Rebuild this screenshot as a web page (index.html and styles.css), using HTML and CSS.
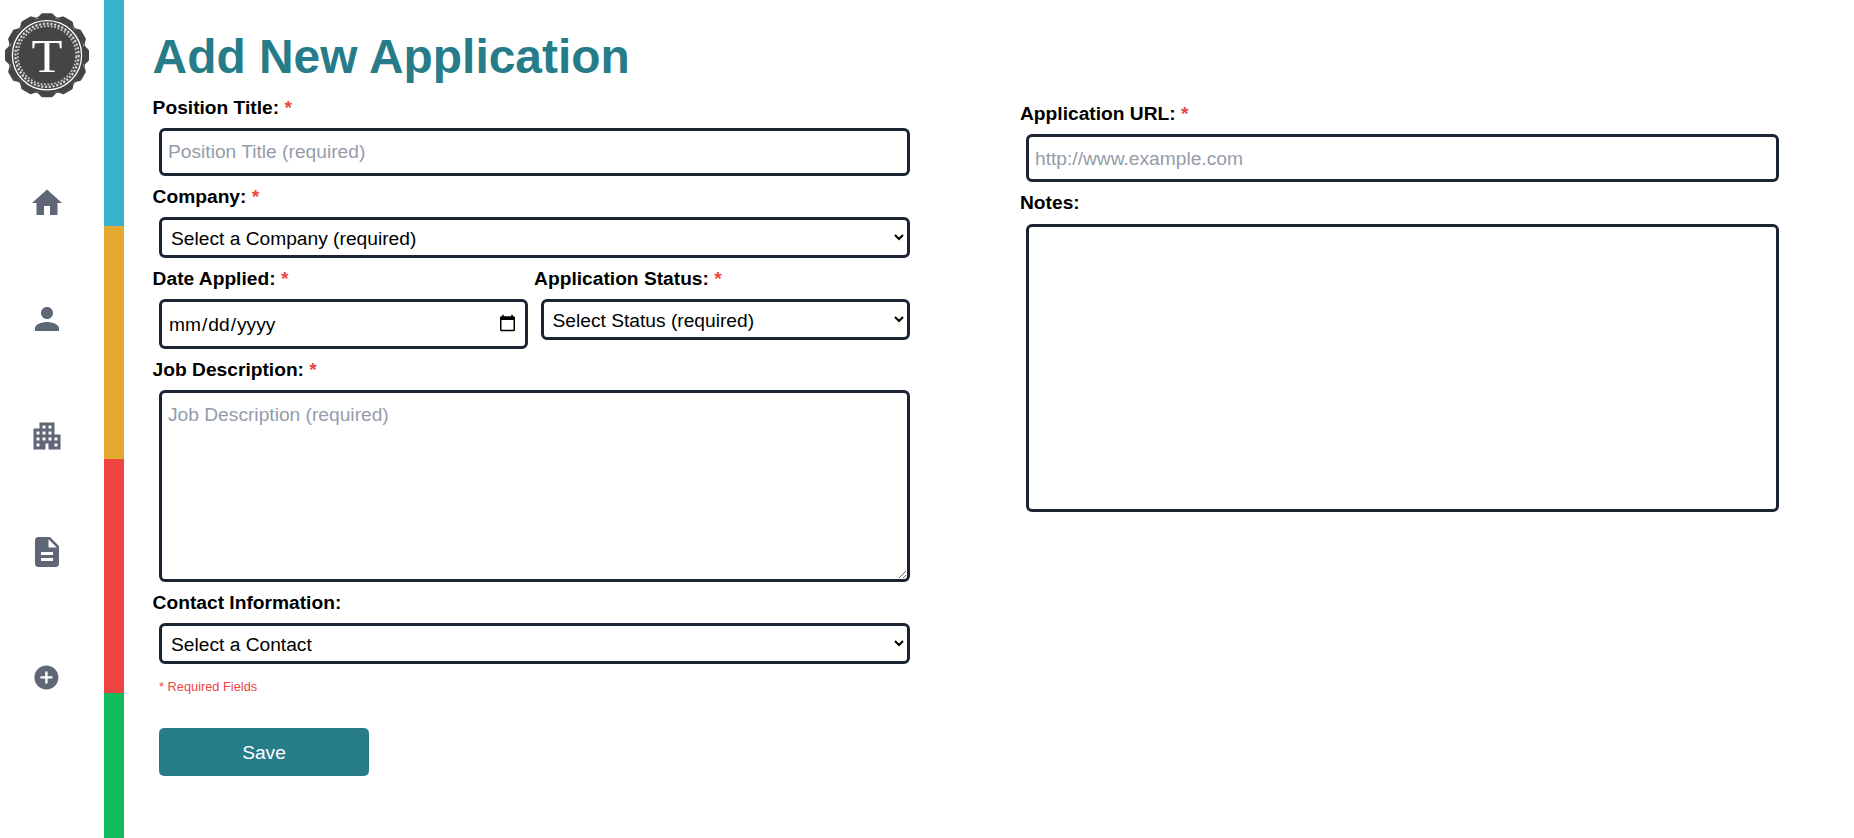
FILE: index.html
```html
<!DOCTYPE html>
<html lang="en">
<head>
<meta charset="utf-8">
<title>Add New Application</title>
<link rel="stylesheet" href="styles.css">
</head>
<body>
<div class="app">
  <nav class="sidebar">
    <svg class="logo" viewBox="-43 -43.3 86 86">
      <defs><path id="tooth" d="M-11-37Q-8-38.5-6-41.2Q-5.300-42-4.500-42H4.500Q5.300-42 6-41.200Q8-38.500 11-37Z"/></defs>
      <g fill="#444547">
        <circle r="38"/>
        <use href="#tooth"/>
        <use href="#tooth" transform="rotate(30)"/>
        <use href="#tooth" transform="rotate(60)"/>
        <use href="#tooth" transform="rotate(90)"/>
        <use href="#tooth" transform="rotate(120)"/>
        <use href="#tooth" transform="rotate(150)"/>
        <use href="#tooth" transform="rotate(180)"/>
        <use href="#tooth" transform="rotate(210)"/>
        <use href="#tooth" transform="rotate(240)"/>
        <use href="#tooth" transform="rotate(270)"/>
        <use href="#tooth" transform="rotate(300)"/>
        <use href="#tooth" transform="rotate(330)"/>
      </g>
      <g fill="none">
        <circle r="34.600" stroke="#fff" stroke-width="1.300"/>
        <circle r="31.600" stroke="#d6d6d6" stroke-width="2.200" stroke-dasharray="2.200 1.600"/>
        <circle r="29.200" stroke="#c4c4c5" stroke-width="1.800" stroke-dasharray="1.900 1.590" transform="rotate(3)"/>
      </g>
      <text class="logo-letter" x="0" y="17" text-anchor="middle" textLength="31" lengthAdjust="spacingAndGlyphs">T</text>
    </svg>
    <a class="nav home"><svg viewBox="0 0 24 24"><path d="M10 20v-6h4v6h5v-8h3L12 3 2 12h3v8z"/></svg></a>
    <a class="nav person"><svg viewBox="0 0 24 24"><path d="M12 12c2.21 0 4-1.79 4-4s-1.79-4-4-4-4 1.79-4 4 1.79 4 4 4zm0 2c-2.67 0-8 1.34-8 4v2h16v-2c0-2.66-5.33-4-8-4z"/></svg></a>
    <a class="nav company"><svg viewBox="0 0 24 24"><path d="M17 11V3H7v4H3v14h8v-4h2v4h8V11h-4zM7 19H5v-2h2v2zm0-4H5v-2h2v2zm0-4H5V9h2v2zm4 4H9v-2h2v2zm0-4H9V9h2v2zm0-4H9V5h2v2zm4 8h-2v-2h2v2zm0-4h-2V9h2v2zm0-4h-2V5h2v2zm4 12h-2v-2h2v2zm0-4h-2v-2h2v2z"/></svg></a>
    <a class="nav document"><svg viewBox="0 0 24 24"><path d="M14 2H6c-1.1 0-1.99.9-1.99 2L4 20c0 1.1.89 2 1.99 2H18c1.1 0 2-.9 2-2V8l-6-6zm2 16H8v-2h8v2zm0-4H8v-2h8v2zm-3-5V3.500L18.500 9H13z"/></svg></a>
    <a class="nav add"><svg viewBox="0 0 24 24"><path d="M12 2C6.480 2 2 6.480 2 12s4.480 10 10 10 10-4.480 10-10S17.520 2 12 2zm5 11h-4v4h-2v-4H7v-2h4V7h2v4h4v2z"/></svg></a>
  </nav>
  <div class="stripes"><i class="blue"></i><i class="gold"></i><i class="red"></i><i class="green"></i></div>
  <form class="form">
    <div class="column main">
      <h1>Add New Application</h1>
      <label>Position Title: <span>*</span></label>
      <input class="field" type="text" placeholder="Position Title (required)">
      <label>Company: <span>*</span></label>
      <select class="field"><option>Select a Company (required)</option></select>
      <div class="pair">
        <div class="column">
          <label>Date Applied: <span>*</span></label>
          <input class="field date" type="date">
        </div>
        <div class="column">
          <label>Application Status: <span>*</span></label>
          <select class="field"><option>Select Status (required)</option></select>
        </div>
      </div>
      <label>Job Description: <span>*</span></label>
      <textarea class="field job" placeholder="Job Description (required)"></textarea>
      <label>Contact Information:</label>
      <select class="field"><option>Select a Contact</option></select>
      <p class="required">* Required Fields</p>
      <button class="save" type="button">Save</button>
    </div>
    <div class="column side">
      <label>Application URL: <span>*</span></label>
      <input class="field url" type="url" placeholder="http://www.example.com">
      <label>Notes:</label>
      <textarea class="field notes"></textarea>
    </div>
  </form>
</div>
</body>
</html>
```
FILE: styles.css
```css
* { box-sizing: border-box; }
body {
  margin: 0;
  background: #fff;
  color: #000;
  font: 19.2px/29px "Liberation Sans", Arial, sans-serif;
  overflow: hidden;
}
.app { display: flex; height: 838px; }

.sidebar {
  width: 104px;
  padding: 12px 0 0 4px;
  display: flex;
  flex-direction: column;
  align-items: flex-start;
}
.logo { width: 86px; height: 86px; flex: none; }
.logo-letter { font-family: "Liberation Serif", serif; font-size: 46px; fill: #fff; }
.nav { width: 86px; height: 36px; display: flex; align-items: center; justify-content: center; }
.nav svg { width: 36px; height: 36px; fill: #5f6776; }
.home { margin-top: 87px; }
.person { margin-top: 80px; }
.company { margin-top: 81px; }
.document { margin-top: 80px; }
.add { margin-top: 89.500px; }
.nav.add svg { width: 28.8px; height: 28.8px; margin-right: .8px; }

.stripes { width: 20px; display: flex; flex-direction: column; }
.blue { height: 226px; background: #38b2cc; }
.gold { height: 233px; background: #e3aa2f; }
.red { height: 234px; background: #ee4442; }
.green { flex: 1; background: #10bc5c; }

.form { flex: 1; display: flex; padding: 29px 75px 0 29px; gap: 104px; }
.column { display: flex; flex-direction: column; flex: 1; min-width: 0; }
.main { flex: 0 0 763px; }
.side { padding-top: 70px; }
h1 { margin: 0 0 0 -.4px; font-size: 47.900px; line-height: 56px; height: 64px; color: #267c88; }
label { font-weight: 700; height: 29px; margin-left: -.4px; }
label span { color: #ee4442; }
.side label { margin-left: 0; }
.field {
  height: 48px;
  margin: 6px 0 6px 6px;
  padding: 6px;
  border: 3px solid #1c2434;
  border-radius: 6px;
  background: #fff;
  color: #000;
  font: inherit;
  outline: none;
}
.main .field { margin-right: 6px; }
select.field { height: 41px; padding: 6px 5px 4px; }
.field::placeholder { color: #959ca9; opacity: 1; }
.pair { display: flex; }
.main .field.date { height: 50px; margin-right: 6.600px; }
.field.job { height: 192px; padding-top: 7px; resize: both; }
.field.url { padding-top: 7px; padding-bottom: 5px; }
.field.notes { height: 288px; margin-top: 7px; resize: none; }
.required { margin: 7px 0 0 6px; font-size: 12.800px; line-height: 20px; color: #ee4442; }
.save {
  width: 210px;
  height: 48px;
  margin: 31px 0 0 6px;
  border: 0;
  border-radius: 5px;
  background: #267c88;
  color: #fff;
  font: inherit;
}
```
